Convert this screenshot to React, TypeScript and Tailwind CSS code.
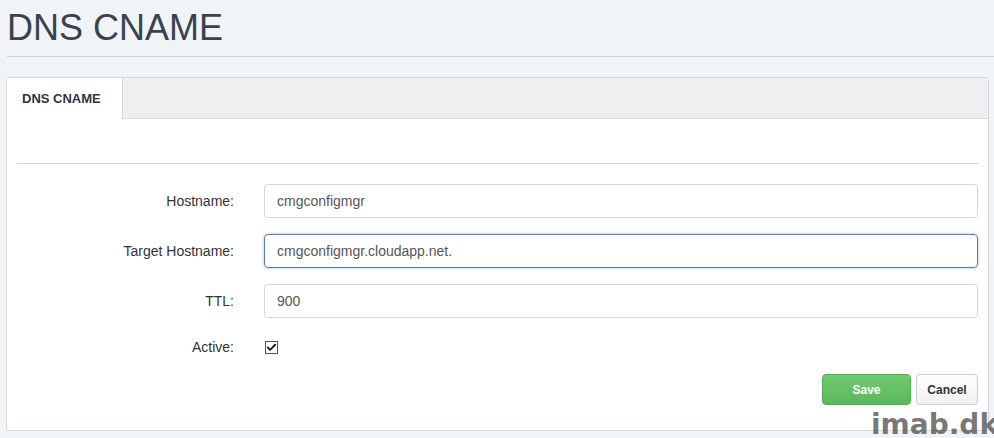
import { Check } from "lucide-react";

const rows = [
  { label: "Hostname:", value: "cmgconfigmgr", focus: false },
  { label: "Target Hostname:", value: "cmgconfigmgr.cloudapp.net.", focus: true },
  { label: "TTL:", value: "900", focus: false },
];

export default function App() {
  return (
    <div className="relative h-[438px] w-[994px] overflow-hidden bg-[#f1f4f7] font-['Liberation_Sans',Arial,sans-serif]">
      <h1 className="pl-[7px] pt-[5px] text-[36px] leading-[46px] text-[#38434e]">DNS CNAME</h1>
      <div className="ml-[7px] mt-[5px] h-px bg-[#d0d3d6]" />

      {/* card */}
      <div className="ml-[6px] mt-[20px] w-[983px] rounded-[3px] border border-[#d4d6d9] bg-white">
        {/* tabs */}
        <div className="flex h-[41px] bg-[#eeeff1]">
          <div className="flex w-[115px] items-center bg-white pl-[15px] text-[13px] font-bold text-[#2c3640]">
            DNS CNAME
          </div>
          <div className="flex-1 border-b border-l border-[#d6d8db]" />
        </div>

        <div className="px-[10px] pt-[44px]">
          <div className="h-px bg-[#cfd1d3]" />
        </div>

        <div className="flex flex-col gap-[16px] pt-[20px]">
          {rows.map((r) => (
            <div key={r.label} className="flex items-center">
              <div className="w-[227px] text-right text-[14px] text-[#333]">{r.label}</div>
              <div
                className={
                  "ml-[30px] flex h-[34px] w-[714px] items-center rounded-[4px] border px-[12px] text-[14px] text-[#555] " +
                  (r.focus
                    ? "border-[#5a7ea8] shadow-[0_0_3px_rgba(90,126,168,0.5)]"
                    : "border-[#d6d6d6]")
                }
              >
                {r.value}
              </div>
            </div>
          ))}
          <div className="flex items-center pt-[3px] leading-[20px]">
            <div className="w-[227px] text-right text-[14px] text-[#333]">Active:</div>
            <div className="ml-[31px] flex h-[13px] w-[13px] items-center justify-center border border-[#555] bg-white">
              <Check className="h-[11px] w-[11px] text-[#1a1a1a]" strokeWidth={4} />
            </div>
          </div>
        </div>

        <div className="flex justify-end gap-[5px] pb-[25px] pr-[10px] pt-[17px]">
          <button className="h-[31px] w-[89px] rounded-[4px] border border-[#4cae4c] bg-[linear-gradient(#72c972,#5cb85c)] text-[12px] font-bold text-white">
            Save
          </button>
          <button className="h-[31px] w-[62px] rounded-[4px] border border-[#ccc] bg-[linear-gradient(#ffffff,#f0f0f0)] text-[12px] font-bold text-[#333]">
            Cancel
          </button>
        </div>
      </div>

      <div className="absolute left-[871px] top-[411px] whitespace-nowrap font-['DejaVu_Sans',sans-serif] text-[28px] font-bold leading-none text-[#5f5f5f]/85">
        imab.dk
      </div>
    </div>
  );
}
